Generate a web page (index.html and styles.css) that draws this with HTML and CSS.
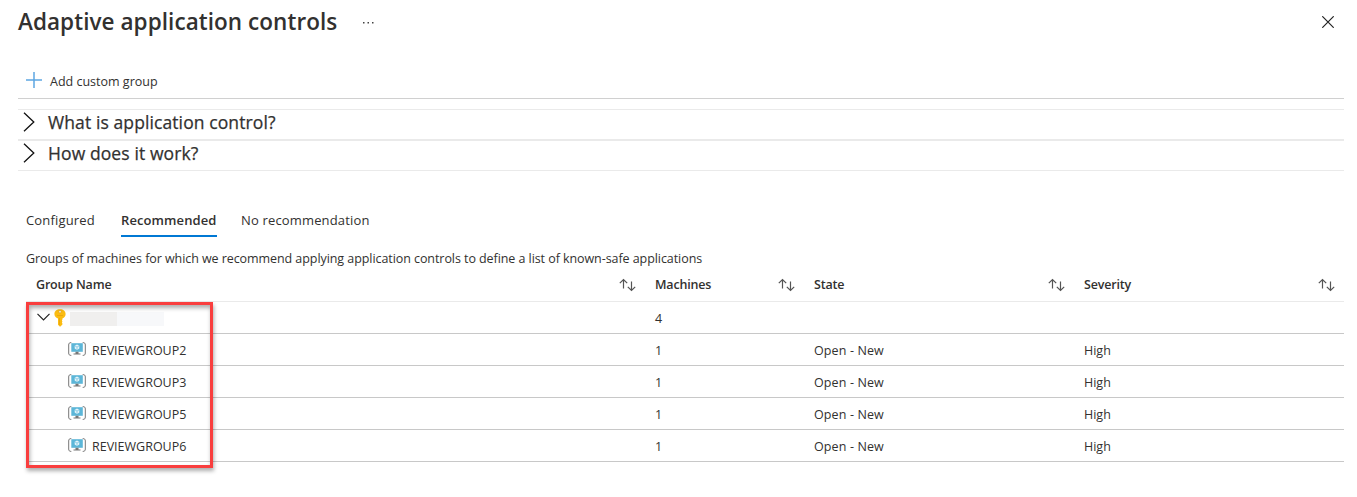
FILE: index.html
```html
<!DOCTYPE html>
<html lang="en">
<head>
<meta charset="utf-8">
<title>Adaptive application controls</title>
<link rel="stylesheet" href="styles.css">
</head>
<body>
<svg class="defs" width="0" height="0" aria-hidden="true">
  <symbol id="sort" viewBox="0 0 17 14"><path d="M4.500 10.500V1.500M.8 5.200l3.700-3.700 3.700 3.700M12.500 3.500v9M8.800 8.800l3.700 3.700 3.700-3.700" fill="none" stroke="#555" stroke-width="1.200"/></symbol>
  <symbol id="chevron" viewBox="0 0 12 20"><path d="M1 .8l9.800 9.200L1 19.200" fill="none" stroke="#111" stroke-width="1.300"/></symbol>
  <symbol id="machine" viewBox="0 0 18 14">
    <path d="M3.300.6C1.300.6.7 1.300.7 3v8c0 1.700.6 2.400 2.600 2.400M14.700.6c2 0 2.600.7 2.600 2.400v8c0 1.700-.6 2.400-2.600 2.400" fill="none" stroke="#777" stroke-width="1"/>
    <path d="M3.300 1.200h11.500v8.600H3.300z" fill="#5cb6d8"/>
    <path d="M7.500 9.800h3v1.700h2v1h-7v-1h2z" fill="#777"/>
    <path d="M9 2.600l2.300 1.200v2.800L9 7.900 6.700 6.600V3.800z" fill="#e4f4fa"/>
    <path d="M6.700 3.800L9 5l2.300-1.200M9 5v2.900" fill="none" stroke="#5cb6d8" stroke-width=".6"/>
  </symbol>
</svg>
<main class="blade">
  <header class="title-bar">
    <h1 class="title">Adaptive application controls</h1>
    <svg class="more" width="13" height="3" viewBox="0 0 13 3"><path d="M1 1h1.500v1.500H1zM5.500 1H7v1.500H5.500zM10 1h1.500v1.500H10z" fill="#444"/></svg>
    <svg class="close" width="12" height="12" viewBox="0 0 12 12"><path d="M.3.3l11.400 11.400M11.700.3L.3 11.700" stroke="#222" stroke-width="1.200"/></svg>
  </header>
  <div class="toolbar">
    <svg width="16" height="16" viewBox="0 0 16 16"><path d="M8 0v16M0 8h16" stroke="#5ea6e2" stroke-width="1.500"/></svg>
    <span class="command">Add custom group</span>
  </div>
  <section class="questions">
    <div class="question"><svg width="12" height="20"><use href="#chevron"/></svg><span>What is application control?</span></div>
    <div class="question"><svg width="12" height="20"><use href="#chevron"/></svg><span>How does it work?</span></div>
  </section>
  <nav class="tabs">
    <span class="tab first">Configured</span>
    <span class="tab active">Recommended</span>
    <span class="tab">No recommendation</span>
  </nav>
  <p class="intro">Groups of machines for which we recommend applying application controls to define a list of known-safe applications</p>
  <section class="table">
    <div class="row head">
      <div class="cell name"><span>Group Name</span><svg class="sort" width="17" height="14"><use href="#sort"/></svg></div>
      <div class="cell"><span>Machines</span><svg class="sort" width="17" height="14"><use href="#sort"/></svg></div>
      <div class="cell"><span>State</span><svg class="sort" width="17" height="14"><use href="#sort"/></svg></div>
      <div class="cell"><span>Severity</span><svg class="sort" width="17" height="14"><use href="#sort"/></svg></div>
    </div>
    <div class="row">
      <div class="cell subscription">
        <svg class="expander" width="13" height="8" viewBox="0 0 13 8"><path d="M.5.8l6 6 6-6" fill="none" stroke="#222" stroke-width="1.200"/></svg>
        <svg class="key" width="12" height="18" viewBox="0 0 12 18"><path d="M6 .3c3.200 0 5.600 2 5.600 4.800 0 2-1.200 3.600-3.200 4.400v1l-.5 1 .5 1-.5 1 .5 1v1L6.500 17.500h-.8L4 15.800V9.500C1.800 8.700.4 7.100.4 5.100.4 2.300 2.800.3 6 .3z" fill="#fbbc12"/><circle cx="6" cy="2.700" r="1.200" fill="#fff" stroke="#dc9708" stroke-width=".6"/><path d="M3 6.500h6M5.500 9v7" stroke="#e9a50c" stroke-width=".8"/></svg>
        <span class="redacted"></span>
      </div>
      <div class="cell">4</div><div class="cell"></div><div class="cell"></div>
    </div>
    <div class="row"><div class="cell group"><svg width="18" height="14"><use href="#machine"/></svg><span>REVIEWGROUP2</span></div><div class="cell">1</div><div class="cell state">Open - New</div><div class="cell">High</div></div>
    <div class="row"><div class="cell group"><svg width="18" height="14"><use href="#machine"/></svg><span>REVIEWGROUP3</span></div><div class="cell">1</div><div class="cell state">Open - New</div><div class="cell">High</div></div>
    <div class="row"><div class="cell group"><svg width="18" height="14"><use href="#machine"/></svg><span>REVIEWGROUP5</span></div><div class="cell">1</div><div class="cell state">Open - New</div><div class="cell">High</div></div>
    <div class="row"><div class="cell group"><svg width="18" height="14"><use href="#machine"/></svg><span>REVIEWGROUP6</span></div><div class="cell">1</div><div class="cell state">Open - New</div><div class="cell">High</div></div>
    <div class="highlight"></div>
  </section>
</main>
</body>
</html>
```
FILE: styles.css
```css
* { box-sizing: border-box; }
body { margin: 0; background: #fff; color: #323130; font: 12.5px/18px "Open Sans", "Noto Sans", sans-serif; }
svg { display: block; flex: none; }
.defs { position: absolute; }
.blade { width: 1326px; height: 497px; margin-left: 18px; overflow: visible; }
.title-bar { display: flex; align-items: center; height: 44px; }
.title { margin: 0; width: 344px; font-size: 22.5px; line-height: 32px; font-weight: 600; letter-spacing: .06px; white-space: nowrap; }
.close { margin-left: auto; margin-right: 10px; }
.toolbar { display: flex; align-items: center; height: 55px; padding: 18px 0 0 8px; gap: 8px; border-bottom: 1px solid #d0d0d0; }
.command { margin-top: 4px; }
.questions { margin-top: 10px; border-top: 1px solid #eaeaea; }
.question { display: flex; align-items: center; gap: 13px; height: 30px; padding: 0 0 5px 5px; border-bottom: 1px solid #eaeaea; font-size: 17.5px; line-height: 24px; letter-spacing: .1px; -webkit-text-stroke: .25px #323130; }
.question:first-child { height: 31px; border-bottom-width: 2px; }
.question span { margin-top: -1px; }
.tabs { display: flex; gap: 24px; height: 38px; margin: 29px 0 0 8px; font-size: 13px; letter-spacing: .16px; }
.tab { height: 37px; padding-top: 11px; }
.tab.first { width: 71px; }
.tab.active { border-bottom: 2px solid #0078d4; width: 96px; font-weight: 600; letter-spacing: .1px; }
.intro { margin: 11px 0 0 8px; line-height: 20px; letter-spacing: -.068px; white-space: nowrap; }
.table { position: relative; margin: 0 0 0 8px; }
.row { display: grid; grid-template-columns: 629px 159px 270px 260px; height: 32px; border-bottom: 1px solid #c8c8c8; }
.cell { display: flex; align-items: center; white-space: nowrap; padding-top: 3px; }
.head { height: 33px; padding-bottom: 1px; border-bottom-color: #eaeaea; font-weight: 600; letter-spacing: -.18px; }
.head .cell { padding-top: 0; }
.name.cell { padding-left: 10px; }
.sort { margin-left: auto; margin-right: 19px; }
.cell:last-child .sort { margin-right: 9px; }
.cell.state { letter-spacing: .12px; }
.subscription.cell { padding: 0 0 0 11px; }
.expander { margin-bottom: 1px; }
.key { margin-left: 4px; }
.redacted { width: 94px; height: 14px; margin: 3px 0 0 4px; background: linear-gradient(90deg, #f0efee 50%, #f7f8fa 50%); }
.group { gap: 6px; padding-left: 42px; }
.group svg { margin-bottom: 4px; }
.highlight { position: absolute; left: 0; top: 33px; width: 187px; height: 166px; border: 3px solid #f93e3e; box-shadow: 1px 3px 4px rgba(0,0,0,.32), inset 1px 3px 4px rgba(0,0,0,.32); }
```
